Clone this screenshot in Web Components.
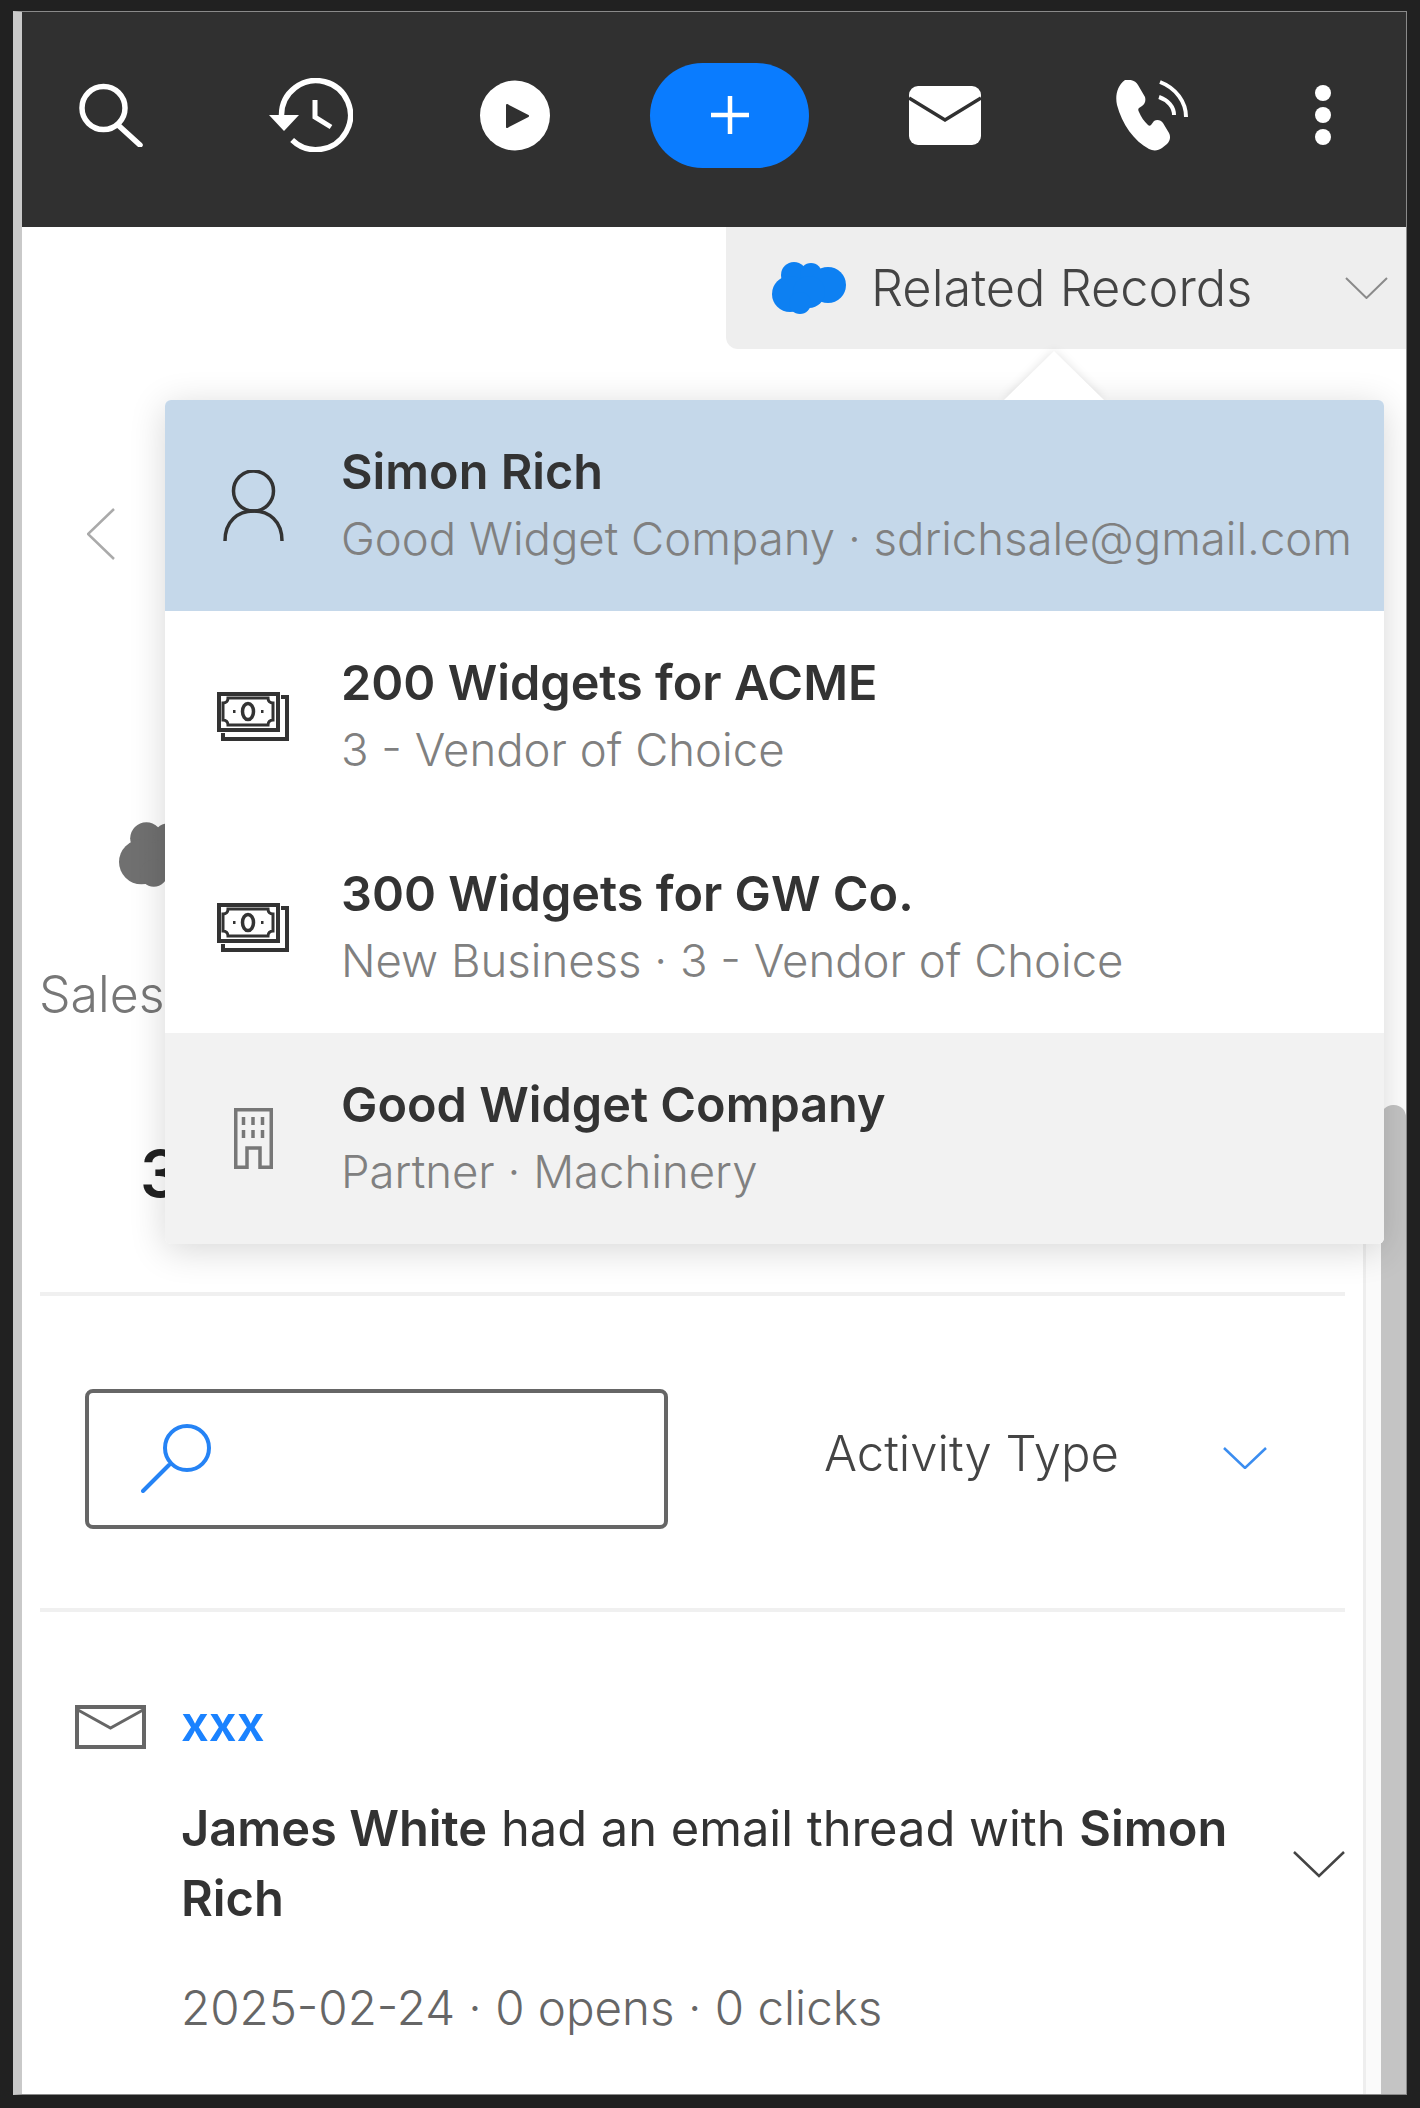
<!doctype html>
<html>
<head>
<meta charset="utf-8">
<style>
    html, body { margin: 0; background: #212121; }
    body { font-family: Inter, "Liberation Sans", sans-serif; height: 2108px; overflow: hidden; }
</style>
</head>
<body>
<app-shell>
    <top-bar slot="bar"></top-bar>
    <related-tab slot="tab">Related Records</related-tab>
    <record-summary slot="summary"></record-summary>
    <activity-filter slot="filter"></activity-filter>
    <activity-item slot="item" subject="xxx" meta="2025-02-24 · 0 opens · 0 clicks"><b>James White</b> had an email thread with <b>Simon</b> <b>Rich</b></activity-item>
    <scroll-rail slot="rail"></scroll-rail>
    <record-popover slot="popover">
        <record-row icon="person" name="Simon Rich" sub="Good Widget Company · sdrichsale@gmail.com" tone="selected"></record-row>
        <record-row icon="money" name="200 Widgets for ACME" sub="3 - Vendor of Choice"></record-row>
        <record-row icon="money" name="300 Widgets for GW Co." sub="New Business · 3 - Vendor of Choice"></record-row>
        <record-row icon="building" name="Good Widget Company" sub="Partner · Machinery" tone="hover"></record-row>
    </record-popover>
</app-shell>

<script>
const cloudPath = `<circle cx="22" cy="13" r="13"/><circle cx="39" cy="12" r="11"/><circle cx="56" cy="23" r="18"/><circle cx="18" cy="32" r="18"/><circle cx="37" cy="30" r="16"/><circle cx="28" cy="41" r="11"/>`

customElements.define('app-shell',
    class AppShell extends HTMLElement {
        constructor() {
            super()
            this.attachShadow({ mode: 'open' })
            this.shadowRoot.innerHTML = `
                <style>
                    :host{
                        display: flex;
                        flex-direction: column;
                        position: relative;
                        box-sizing: border-box;
                        width: 1394px;
                        height: 2084px;
                        margin: 11px 0 0 13px;
                        background: #fff;
                        border-top: 1px solid #8a8a8a;
                        border-left: 9px solid #c9c9c9;
                        border-right: 1px solid #8a8a8a;
                        border-bottom: 1px solid #8a8a8a;
                        overflow: hidden;
                    }
                </style>
                <slot name="bar"></slot>
                <slot name="tab"></slot>
                <slot name="summary"></slot>
                <slot name="filter"></slot>
                <slot name="item"></slot>
                <slot name="rail"></slot>
                <slot name="popover"></slot>
            `
        }
    })

customElements.define('top-bar',
    class TopBar extends HTMLElement {
        constructor() {
            super()
            this.attachShadow({ mode: 'open' })
            this.shadowRoot.innerHTML = `
                <style>
                    :host{
                        display: flex;
                        align-items: center;
                        height: 215px;
                        padding: 0 0 9px 57px;
                        background: #303030;
                        box-sizing: border-box;
                    }
                    svg{ display: block; flex: none; }
                    .add{
                        flex: none;
                        display: flex;
                        align-items: center;
                        justify-content: center;
                        width: 159px;
                        height: 105px;
                        margin-left: 100px;
                        border-radius: 53px;
                        background: #0a7cff;
                    }
                </style>
                <svg width="64" height="64" viewBox="0 0 64 64" fill="none" stroke="#fff" stroke-width="5.500" stroke-linecap="round">
                    <circle cx="24.500" cy="25" r="21.500"/><path d="M39 42 61 62"/>
                </svg>
                <svg style="margin-left:126px" width="84" height="74" viewBox="0 0 84 74" fill="none" stroke="#fff" stroke-width="5.500">
                    <path d="M12.500 37A34.500 34.500 0 1 1 23.100 62"/>
                    <path d="M0 37H30L15 53Z" fill="#fff" stroke="none"/>
                    <path d="M46 22V39L62 49" stroke-width="5"/>
                </svg>
                <svg style="margin-left:127px" width="70" height="71" viewBox="0 0 70 71">
                    <circle cx="35" cy="35.500" r="35" fill="#fff"/>
                    <path d="M27 25 48 36 27 47Z" fill="#303030" stroke="#303030" stroke-width="2" stroke-linejoin="round"/>
                </svg>
                <div class="add">
                    <svg width="40" height="40" viewBox="0 0 40 40" stroke="#fff" stroke-width="4.500"><path d="M20 1V39M1 20H39"/></svg>
                </div>
                <svg style="margin-left:100px" width="72" height="59" viewBox="0 0 72 59">
                    <rect width="72" height="59" rx="9" fill="#fff"/>
                    <path d="M0 12 36 34 72 12" fill="none" stroke="#303030" stroke-width="3.500"/>
                </svg>
                <svg style="margin-left:135px" width="72" height="71" viewBox="0 0 72 71">
                    <path fill="#fff" d="M9 0C15-1 20 1 22 5L29 17C30 21 29 24 26 26L23 28C22 29 22 30 23 32 25 37 28 41 32 45 33 46 34 46 35 45L38 41C41 39 45 40 47 43L53 53C55 57 54 61 51 64L46 68C42 71 37 71 33 69 18 61 6 44 1 25 -1 16 1 6 9 0Z"/>
                    <path fill="none" stroke="#fff" stroke-width="4" d="M44 2C60 8 70 22 70 37M43 17C52 20 58 27 58 35"/>
                </svg>
                <svg style="margin-left:127px" width="16" height="60" viewBox="0 0 16 60" fill="#fff">
                    <circle cx="8" cy="8" r="8"/><circle cx="8" cy="30" r="8"/><circle cx="8" cy="52" r="8"/>
                </svg>
            `
        }
    })

customElements.define('related-tab',
    class RelatedTab extends HTMLElement {
        constructor() {
            super()
            this.attachShadow({ mode: 'open' })
            this.shadowRoot.innerHTML = `
                <style>
                    :host{
                        display: flex;
                        align-items: center;
                        align-self: flex-end;
                        box-sizing: border-box;
                        width: 680px;
                        height: 122px;
                        padding: 0 18px 0 46px;
                        background: #eee;
                        border-bottom-left-radius: 12px;
                        color: #444;
                        font-size: 50.500px;
                        font-weight: 300;
                    }
                    span{ margin: -2px 0 0 25px; flex: 1; }
                    svg{ display: block; flex: none; }
                </style>
                <svg width="74" height="52" viewBox="0 0 74 52" fill="#0d80f2">${cloudPath}</svg>
                <span><slot></slot></span>
                <svg width="43" height="22" viewBox="0 0 43 22" fill="none" stroke="#8a8a8a" stroke-width="2"><path d="M1 1 21.500 21 42 1"/></svg>
            `
        }
    })

customElements.define('record-summary',
    class RecordSummary extends HTMLElement {
        constructor() {
            super()
            this.attachShadow({ mode: 'open' })
            this.shadowRoot.innerHTML = `
                <style>
                    :host{
                        display: block;
                        box-sizing: border-box;
                        height: 947px;
                        margin: 0 61px 0 18px;
                        border-bottom: 4px solid #f0f0f0;
                    }
                    .back{ display: block; margin: 159px 0 0 47px; }
                    .cloud{ display: block; margin: 262px 0 0 79px; }
                    .label{
                        margin: 77px 0 0 -1px;
                        color: #777;
                        font-size: 50px;
                        font-weight: 300;
                        line-height: 60px;
                    }
                    .count{
                        margin: 115px 0 0 100px;
                        color: #222;
                        font-size: 64px;
                        font-weight: 600;
                        line-height: 70px;
                    }
                </style>
                <svg class="back" width="28" height="52" viewBox="0 0 28 52" fill="none" stroke="#aaa" stroke-width="2.500"><path d="M27 1 1 26 27 51"/></svg>
                <svg class="cloud" width="92" height="65" viewBox="0 0 74 52" fill="#707070">${cloudPath}</svg>
                <div class="label">Sales</div>
                <div class="count">3</div>
            `
        }
    })

customElements.define('activity-filter',
    class ActivityFilter extends HTMLElement {
        constructor() {
            super()
            this.attachShadow({ mode: 'open' })
            this.shadowRoot.innerHTML = `
                <style>
                    :host{
                        display: flex;
                        align-items: center;
                        box-sizing: border-box;
                        height: 316px;
                        margin: 0 61px 0 18px;
                        padding: 13px 0 0 45px;
                        border-bottom: 4px solid #f0f0f0;
                        color: #444;
                    }
                    .box{
                        box-sizing: border-box;
                        flex: none;
                        width: 583px;
                        height: 140px;
                        padding: 31px 0 0 52px;
                        border: 4px solid #666;
                        border-radius: 8px;
                    }
                    svg{ display: block; }
                    span{
                        margin: -10px 0 0 156px;
                        font-size: 49px;
                        font-weight: 300;
                    }
                    .down{ margin-left: 104px; margin-top: -2px; }
                </style>
                <div class="box">
                    <svg width="71" height="69" viewBox="0 0 71 69" fill="none" stroke="#2583f5" stroke-width="4" stroke-linecap="round">
                        <circle cx="46" cy="24" r="22"/><path d="M28 41 2 67"/>
                    </svg>
                </div>
                <span>Activity Type</span>
                <svg class="down" width="44" height="22" viewBox="0 0 44 22" fill="none" stroke="#3b8df0" stroke-width="2.500"><path d="M1 1 22 21 43 1"/></svg>
            `
        }
    })

customElements.define('activity-item',
    class ActivityItem extends HTMLElement {
        constructor() {
            super()
            this.attachShadow({ mode: 'open' })
            this.shadowRoot.innerHTML = `
                <style>
                    :host{
                        display: grid;
                        grid-template-columns: 159px 1057px 1fr;
                        box-sizing: border-box;
                        margin: 0 39px 0 0;
                        padding-top: 93px;
                    }
                    .mail{ display: block; margin-left: 53px; }
                    .subject{
                        margin-top: -3px;
                        color: #1a82ff;
                        font-size: 49px;
                        font-weight: 600;
                        line-height: 44px;
                    }
                    .body{
                        grid-column: 2;
                        margin-top: 45px;
                        color: #333;
                        font-size: 48.800px;
                        font-weight: 400;
                        line-height: 70px;
                    }
                    ::slotted(b){ font-weight: 600; }
                    .meta{
                        grid-column: 2;
                        margin-top: 39px;
                        color: #666;
                        font-size: 47.500px;
                        font-weight: 300;
                        line-height: 70px;
                    }
                    .toggle{ display: block; grid-column: 3; grid-row: 2; margin: 101px 0 0 55px; }
                </style>
                <svg class="mail" width="71" height="44" viewBox="0 0 71 44" fill="none" stroke="#666">
                    <rect x="2" y="2" width="67" height="40" stroke-width="4"/>
                    <path d="M3 5 35.500 23 68 5" stroke-width="3"/>
                </svg>
                <div class="subject"></div>
                <div class="body"><slot></slot></div>
                <svg class="toggle" width="52" height="28" viewBox="0 0 52 28" fill="none" stroke="#444" stroke-width="2.500"><path d="M1 2 26 26 51 2"/></svg>
                <div class="meta"></div>
            `
        }
        connectedCallback() {
            this.shadowRoot.querySelector('.subject').textContent = this.getAttribute('subject')
            this.shadowRoot.querySelector('.meta').textContent = this.getAttribute('meta')
        }
    })

customElements.define('scroll-rail',
    class ScrollRail extends HTMLElement {
        constructor() {
            super()
            this.attachShadow({ mode: 'open' })
            this.shadowRoot.innerHTML = `
                <style>
                    :host{
                        position: absolute;
                        top: 388px;
                        right: 0;
                        bottom: 0;
                        width: 43px;
                    }
                    .strip{
                        position: absolute;
                        top: 700px;
                        left: 0;
                        right: 25px;
                        bottom: 0;
                        border-left: 3px solid #eee;
                        background: #fafafa;
                    }
                    .thumb{
                        position: absolute;
                        top: 705px;
                        right: 0;
                        bottom: 0;
                        width: 25px;
                        border-radius: 12px 12px 0 0;
                        background: #c4c4c4;
                    }
                </style>
                <div class="strip"></div>
                <div class="thumb"></div>
            `
        }
    })

customElements.define('record-popover',
    class RecordPopover extends HTMLElement {
        constructor() {
            super()
            this.attachShadow({ mode: 'open' })
            this.shadowRoot.innerHTML = `
                <style>
                    :host{
                        position: absolute;
                        left: 143px;
                        top: 388px;
                        width: 1219px;
                        display: block;
                        border-radius: 6px;
                        background: #fff;
                        box-shadow: 0 6px 36px rgba(0,0,0,.16);
                    }
                    .caret-wrap{
                        position: absolute;
                        left: 839px;
                        top: -49px;
                        width: 100px;
                        height: 49px;
                        filter: drop-shadow(0 0 5px rgba(0,0,0,.12));
                    }
                    .caret{
                        width: 100%;
                        height: 100%;
                        background: #fff;
                        clip-path: polygon(50% 0, 100% 100%, 0 100%);
                    }
                    .list{ position: relative; border-radius: 6px; overflow: hidden; }
                </style>
                <div class="caret-wrap"><div class="caret"></div></div>
                <div class="list"><slot></slot></div>
            `
        }
    })

const rowIcons = {
    person: `<svg width="61" height="71" viewBox="0 0 61 71" fill="none" stroke="#333" stroke-width="3.500"><circle cx="30.500" cy="21" r="20"/><path d="M2 71C2 51 15 41 30.500 41 46 41 59 51 59 71"/></svg>`,
    money: `<svg width="72" height="49" viewBox="0 0 72 49" fill="none" stroke="#333" stroke-width="4">
        <rect x="2" y="2" width="59" height="36"/>
        <path d="M64 5H70V47H6V41"/>
        <path stroke-width="3" d="M11 6H51C51 9 53 11 56 11V28C53 28 51 30 51 33H11C11 30 9 28 6 28V11C9 11 11 9 11 6Z"/>
        <ellipse cx="31" cy="19.500" rx="5.500" ry="8" stroke-width="3.500"/>
        <path stroke-width="3" d="M16 19.500H18.500M44 19.500H46.500"/>
    </svg>`,
    building: `<svg width="39" height="61" viewBox="0 0 39 61" fill="none" stroke="#777" stroke-width="3.500">
        <path d="M1.750 1.750H37.250V59.250H26V40H13V59.250H1.750Z"/>
        <path d="M9.500 9V17M19 9V17M28.500 9V17M9.500 22V30M19 22V30M28.500 22V30"/>
    </svg>`
}

customElements.define('record-row',
    class RecordRow extends HTMLElement {
        constructor() {
            super()
            this.attachShadow({ mode: 'open' })
            this.shadowRoot.innerHTML = `
                <style>
                    :host{
                        display: grid;
                        grid-template-columns: 176px 1fr;
                        align-items: center;
                        height: 211px;
                    }
                    :host([tone="selected"]){ background: #c5d8ea; }
                    :host([tone="hover"]){ background: #f2f2f2; }
                    .icon{ display: flex; justify-content: center; }
                    svg{ display: block; }
                    .name{
                        color: #333;
                        font-size: 48.600px;
                        font-weight: 600;
                        line-height: 66px;
                        white-space: nowrap;
                    }
                    .sub{
                        margin-top: 1px;
                        color: #808080;
                        font-size: 45.500px;
                        font-weight: 300;
                        line-height: 66px;
                        white-space: nowrap;
                    }
                </style>
                <div class="icon"></div>
                <div><div class="name"></div><div class="sub"></div></div>
            `
        }
        connectedCallback() {
            this.shadowRoot.querySelector('.icon').innerHTML = rowIcons[this.getAttribute('icon')] || ''
            this.shadowRoot.querySelector('.name').textContent = this.getAttribute('name')
            this.shadowRoot.querySelector('.sub').textContent = this.getAttribute('sub')
        }
    })
</script>
</body>
</html>
